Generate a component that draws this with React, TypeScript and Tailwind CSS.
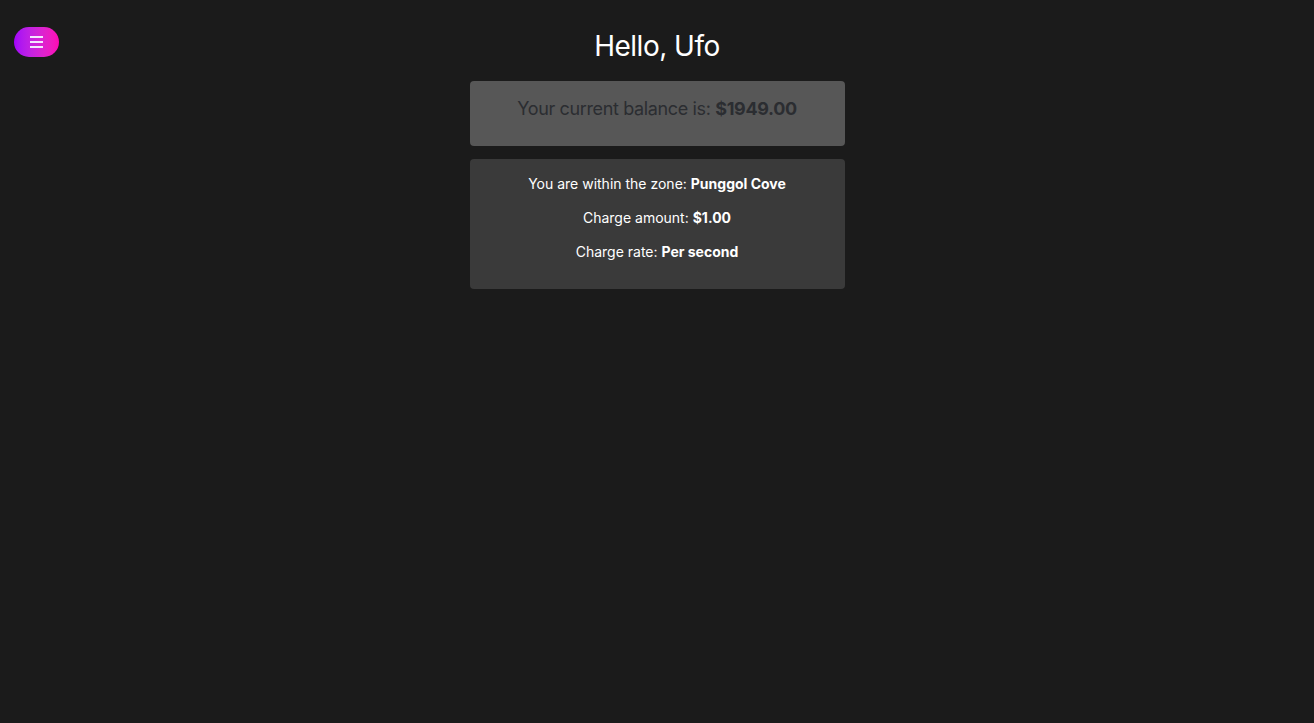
import React from "react";

export default function App() {
  return (
    <div
      className="relative min-h-[723px] w-full bg-[#1b1b1b] text-white"
      style={{ fontFamily: "Inter, 'Noto Sans', sans-serif" }}
    >
      <button className="absolute left-[14px] top-[27px] flex h-[30px] w-[45px] flex-col items-center justify-center gap-[3px] rounded-full bg-gradient-to-r from-[#a300fa] to-[#ff05b4]">
        <span className="block h-[2px] w-[13px] bg-[#f4e6ff]" />
        <span className="block h-[2px] w-[13px] bg-[#f4e6ff]" />
        <span className="block h-[2px] w-[13px] bg-[#f4e6ff]" />
      </button>
      <div className="flex flex-col items-center pt-[28px]">
        <h1 className="text-[28px] leading-[36px] font-normal tracking-[-0.018em] text-white">Hello, Ufo</h1>
        <div className="mt-[17px] w-[375px] rounded-[4px] bg-[#575757] pt-[14px] pb-[23px] text-center text-[18px] leading-[28px] tracking-[-0.02em] text-[#2b2d31]">
          Your current balance is: <span className="font-bold">$1949.00</span>
        </div>
        <div className="mt-[13px] flex w-[375px] flex-col gap-[14px] rounded-[4px] bg-[#3a3a3a] pt-[15px] pb-[27px] text-center text-[14px] leading-[20px] text-white">
          <p>
            You are within the zone: <span className="font-bold">Punggol Cove</span>
          </p>
          <p>
            Charge amount: <span className="font-bold">$1.00</span>
          </p>
          <p>
            Charge rate: <span className="font-bold">Per second</span>
          </p>
        </div>
      </div>
    </div>
  );
}
